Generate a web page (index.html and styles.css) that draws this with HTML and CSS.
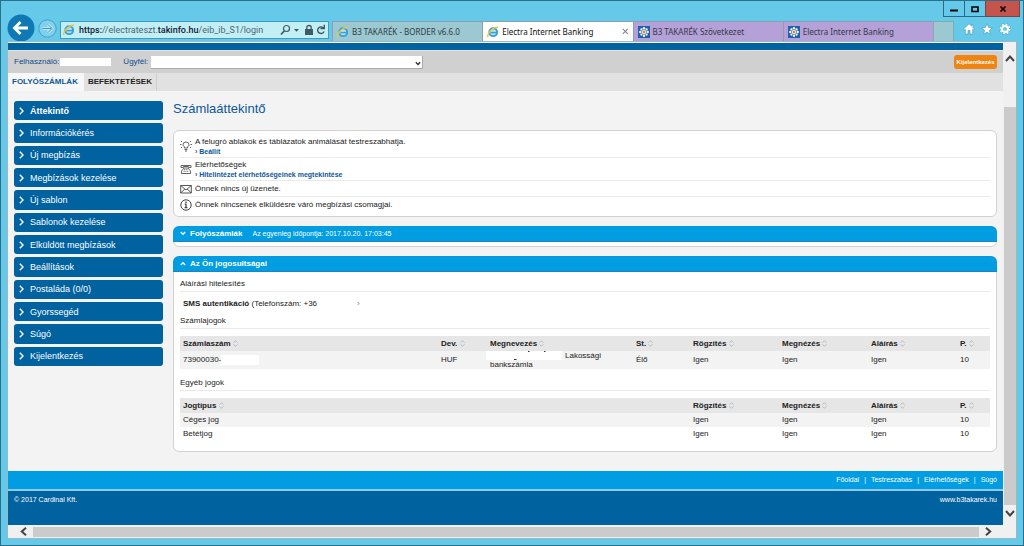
FILE: index.html
```html
<!DOCTYPE html>
<html lang="hu">
<head>
<meta charset="utf-8">
<title>Electra Internet Banking</title>
<link rel="stylesheet" href="styles.css">
</head>
<body>
<svg class="defs" aria-hidden="true">
  <symbol id="ie" viewBox="0 0 12 12"><circle cx="6.2" cy="6.2" r="3.9" fill="#b9e4f8" stroke="#3d9fdc" stroke-width="2"/><path d="M3.5 6.6h7" stroke="#3d9fdc" stroke-width="1.6"/><path d="M1 11C-.4 8 6 .8 11 1.2" fill="none" stroke="#e9c63a" stroke-width="1.5"/></symbol>
  <symbol id="b3" viewBox="0 0 12 12"><path fill="#1d62ad" d="M0 0h12v12H0z"/><g fill="#fff"><circle cx="6" cy="2.3" r="1.2"/><circle cx="6" cy="9.7" r="1.2"/><circle cx="2.3" cy="6" r="1.2"/><circle cx="9.7" cy="6" r="1.2"/><circle cx="3.4" cy="3.4" r="1.1"/><circle cx="8.6" cy="3.4" r="1.1"/><circle cx="3.4" cy="8.6" r="1.1"/><circle cx="8.6" cy="8.6" r="1.1"/><circle cx="6" cy="6" r="2.2"/></g><circle cx="6" cy="6" r="1.4" fill="#e5803c"/></symbol>
  <symbol id="sort" viewBox="0 0 5 7"><path d="M.5 2.7 2.5.7l2 2M.5 4.3l2 2 2-2" fill="none" stroke="#b8b8b8" stroke-width=".9"/></symbol>
  <symbol id="chev" viewBox="0 0 5 8"><path d="M.8.8 4 4 .8 7.2" fill="none" stroke="currentColor" stroke-width="1.4"/></symbol>
</svg>

<header class="titlebar">
  <button class="win" aria-label="Minimize"><svg width="10" height="8"><path d="M1 5.500h8" stroke="#000" stroke-width="2"/></svg></button>
  <button class="win" aria-label="Maximize"><svg width="10" height="8"><path d="M2 2h6v4.500H2z" fill="none" stroke="#000" stroke-width="1.600"/></svg></button>
  <button class="win close" aria-label="Close"><svg width="8" height="8"><path d="m1.500 1.500 5 5m0-5-5 5" stroke="#000" stroke-width="1.700"/></svg></button>
</header>

<div class="toolbar">
  <button class="back" aria-label="Back"><svg width="28" height="28" viewBox="0 0 28 28"><circle cx="14" cy="14" r="13.500" fill="#0f79b5"/><path d="M7.500 14H21M13.500 8l-6 6 6 6" fill="none" stroke="#fff" stroke-width="2.800"/></svg></button>
  <button class="forward" aria-label="Forward"><svg width="19" height="19" viewBox="0 0 19 19"><circle cx="9.500" cy="9.500" r="8.700" fill="#7fcfee" stroke="#479fc4"/><path d="M4.500 9.500h9M10 5.500l4 4-4 4" fill="none" stroke="#b9e9f8" stroke-width="3"/><path d="M4.500 9.500h9M10 5.500l4 4-4 4" fill="none" stroke="#3c98c0"/></svg></button>
  <div class="address">
    <svg width="12" height="12"><use href="#ie"/></svg>
    <span class="url"><b>https:</b>//electrateszt.<b>takinfo.hu</b>/eib_ib_S1/login</span>
    <svg width="46" height="12" viewBox="0 0 46 12" fill="none" stroke="#3f5a66"><circle cx="6.500" cy="4.500" r="3" stroke-width="1.200"/><path d="M4.200 7 1 10.500" stroke-width="1.700"/><path d="M14 5h5l-2.500 2.800z" fill="#3f5a66" stroke="none"/><path d="M25 5h8v6h-8z" fill="#3f5a66" stroke="none"/><path d="M26.800 5.500V3.500q0-2 2.200-2t2.200 2v2" stroke-width="1.300"/><path d="M43.600 4.200A3.300 3.300 0 1 0 44 7.500M44.300.7v3.800h-3.800" stroke-width="1.400"/></svg>
  </div>
  <nav class="tabs">
    <a class="tab teal" href="#"><svg width="12" height="12"><use href="#ie"/></svg>B3 TAKARÉK - BORDER v6.6.0</a>
    <a class="tab active" href="#"><svg width="12" height="12"><use href="#ie"/></svg>Electra Internet Banking<svg class="x" width="7" height="7"><path d="m.8.8 5 5m0-5-5 5" stroke="#8b8b8b" stroke-width="1.200"/></svg></a>
    <a class="tab lilac" href="#"><svg width="12" height="12"><use href="#b3"/></svg>B3 TAKARÉK Szövetkezet</a>
    <a class="tab lilac" href="#"><svg width="12" height="12"><use href="#b3"/></svg>Electra Internet Banking</a>
  </nav>
  <button class="newtab" aria-label="New tab"></button>
  <div class="tools">
    <button aria-label="Home"><svg width="12" height="12"><path d="M6 .8.6 6l.9.9.8-.7v4.900h2.700V7.500h2v3.600h2.700V6.200l.8.7.9-.9-1.500-1.500V1.500H8.500v1.600z" fill="#fff" stroke="#4a93b0" stroke-width=".6"/></svg></button>
    <button aria-label="Favorites"><svg width="12" height="12"><path d="m6 .6 1.500 3.800 4 .3-3.100 2.600 1 4L6 9.100l-3.400 2.200 1-4L.5 4.700l4-.3z" fill="#fff" stroke="#4a93b0" stroke-width=".6"/></svg></button>
    <button aria-label="Tools"><svg width="12" height="12" fill="none"><circle cx="6" cy="6" r="4.900" stroke="#4a93b0" stroke-width="2" stroke-dasharray="2.300 1.550"/><circle cx="6" cy="6" r="4.700" stroke="#fff" stroke-width="1.600" stroke-dasharray="1.900 1.790"/><circle cx="6" cy="6" r="3" stroke="#fff" stroke-width="1.900"/></svg></button>
  </div>
</div>

<div class="frame">
  <div class="page">
    <div class="brand"></div>
    <form class="userbar">
      <span>Felhasználó:</span><span class="blank user"></span>
      <label for="client">Ügyfél:</label>
      <span class="selectbox"><select id="client"><option></option></select><svg width="6" height="5"><path d="m.8 1.200 2.200 2.300 2.200-2.300" fill="none" stroke="#333" stroke-width="1.400"/></svg></span>
      <button class="logout" type="button">Kijelentkezés</button>
    </form>
    <nav class="maintabs"><a class="on" href="#">FOLYÓSZÁMLÁK</a><a href="#">BEFEKTETÉSEK</a></nav>

    <div class="content">
      <nav class="side">
        <a class="current" href="#"><svg width="5" height="8"><use href="#chev"/></svg>Áttekintő</a>
        <a href="#"><svg width="5" height="8"><use href="#chev"/></svg>Információkérés</a>
        <a href="#"><svg width="5" height="8"><use href="#chev"/></svg>Új megbízás</a>
        <a href="#"><svg width="5" height="8"><use href="#chev"/></svg>Megbízások kezelése</a>
        <a href="#"><svg width="5" height="8"><use href="#chev"/></svg>Új sablon</a>
        <a href="#"><svg width="5" height="8"><use href="#chev"/></svg>Sablonok kezelése</a>
        <a href="#"><svg width="5" height="8"><use href="#chev"/></svg>Elküldött megbízások</a>
        <a href="#"><svg width="5" height="8"><use href="#chev"/></svg>Beállítások</a>
        <a href="#"><svg width="5" height="8"><use href="#chev"/></svg>Postaláda (0/0)</a>
        <a href="#"><svg width="5" height="8"><use href="#chev"/></svg>Gyorssegéd</a>
        <a href="#"><svg width="5" height="8"><use href="#chev"/></svg>Súgó</a>
        <a href="#"><svg width="5" height="8"><use href="#chev"/></svg>Kijelentkezés</a>
      </nav>

      <main>
        <h1>Számlaáttekintő</h1>
        <ul class="card notices">
          <li class="tall"><svg width="12" height="12" fill="none" stroke="#555" stroke-width=".9"><path d="M4.500 8V7Q3 5.800 3 4.800a3 2.800 0 0 1 6 0Q9 5.800 7.500 7v1zM4.500 9.500h3M5 11h2M0 4.500h1.500m9 0H12M1 1l1 1m9-1-1 1M1 8l1-1m9 1-1-1"/></svg><div>A felugró ablakok és táblázatok animálását testreszabhatja.<a href="#">› Beállít</a></div></li>
          <li class="tall"><svg width="12" height="12" fill="none" stroke="#555" stroke-width=".9"><path d="M1 4.500V2.500h10v2H8.500V3.500h-5v1zM4 5h4l2.500 3v2.500h-9V8z"/><path d="M4 6.700h4M3.500 8.300h5" stroke-dasharray="1 .8"/></svg><div>Elérhetőségek<a href="#">› Hitelintézet elérhetőségeinek megtekintése</a></div></li>
          <li><svg width="12" height="12" fill="none" stroke="#444" stroke-width=".9"><path d="M.7 2.500h10.600v7.500H.7zl5.300 4.500 5.300-4.500M.7 10l4-4m6.600 4-4-4"/></svg><div>Önnek nincs új üzenete.</div></li>
          <li><svg width="12" height="12" fill="none" stroke="#444"><circle cx="6" cy="6" r="5.200"/><path d="M6 2.500v1.400M4.800 5.200H6v3.500m-1.400 0h2.800" stroke-width="1.300"/></svg><div>Önnek nincsenek elküldésre váró megbízási csomagjai.</div></li>
        </ul>

        <section class="card closed">
          <h2><svg width="6" height="5"><path d="m.8 1 2.200 2.300L5.200 1" fill="none" stroke="#fff" stroke-width="1.300"/></svg>Folyószámlák <small>Az egyenleg időpontja: 2017.10.20. 17:03:45</small></h2>
        </section>

        <section class="card rights">
          <h2><svg width="6" height="5"><path d="m.8 4 2.200-2.300L5.200 4" fill="none" stroke="#fff" stroke-width="1.300"/></svg>Az Ön jogosultságai</h2>
          <div class="inner">
            <h3>Aláírási hitelesítés</h3>
            <p><b>SMS autentikáció</b> (Telefonszám: +36<span class="rest">›</span></p>
            <h3>Számlajogok</h3>
            <table>
              <colgroup><col><col class="c-dev"><col class="c-name"><col class="c-st"><col class="c-r"><col class="c-r"><col class="c-r"><col class="c-p"></colgroup>
              <thead><tr><th>Számlaszám <svg width="5" height="7"><use href="#sort"/></svg></th><th>Dev. <svg width="5" height="7"><use href="#sort"/></svg></th><th>Megnevezés <svg width="5" height="7"><use href="#sort"/></svg></th><th>St. <svg width="5" height="7"><use href="#sort"/></svg></th><th>Rögzítés <svg width="5" height="7"><use href="#sort"/></svg></th><th>Megnézés <svg width="5" height="7"><use href="#sort"/></svg></th><th>Aláírás <svg width="5" height="7"><use href="#sort"/></svg></th><th>P. <svg width="5" height="7"><use href="#sort"/></svg></th></tr></thead>
              <tbody><tr class="shade"><td>73900030-<span class="blank acct"></span></td><td>HUF</td><td class="name"><svg class="mask" width="76" height="9"><path d="M0 0h76v9H0z" fill="#fff"/><path d="M42 .5h1.500M58 .5h1.500M28 8.500h2.500" stroke="#333"/></svg>Lakossági<br>bankszámla</td><td>Élő</td><td>Igen</td><td>Igen</td><td>Igen</td><td>10</td></tr></tbody>
            </table>
            <h3 class="other">Egyéb jogok</h3>
            <table>
              <colgroup><col><col class="c-r"><col class="c-r"><col class="c-r"><col class="c-p"></colgroup>
              <thead><tr><th>Jogtípus <svg width="5" height="7"><use href="#sort"/></svg></th><th>Rögzítés <svg width="5" height="7"><use href="#sort"/></svg></th><th>Megnézés <svg width="5" height="7"><use href="#sort"/></svg></th><th>Aláírás <svg width="5" height="7"><use href="#sort"/></svg></th><th>P. <svg width="5" height="7"><use href="#sort"/></svg></th></tr></thead>
              <tbody><tr class="shade"><td>Céges jog</td><td>Igen</td><td>Igen</td><td>Igen</td><td>10</td></tr>
              <tr><td>Betétjog</td><td>Igen</td><td>Igen</td><td>Igen</td><td>10</td></tr></tbody>
            </table>
          </div>
        </section>
      </main>
    </div>

    <footer>
      <nav class="links"><a href="#">Főoldal</a>|<a href="#">Testreszabás</a>|<a href="#">Elérhetőségek</a>|<a href="#">Súgó</a></nav>
      <div class="legal"><span>© 2017 Cardinal Kft.</span><a href="#">www.b3takarek.hu</a></div>
    </footer>
  </div>
  <div class="vscroll"><svg width="10" height="7"><path d="m1 6 4-4.500L9 6" fill="none" stroke="#444" stroke-width="2"/></svg><i></i><svg width="10" height="7"><path d="m1 1 4 4.500L9 1" fill="none" stroke="#444" stroke-width="2"/></svg></div>
  <div class="hscroll"><svg width="7" height="9"><path d="M6 .8 1.800 4.500 6 8.200" fill="none" stroke="#444" stroke-width="2"/></svg><i></i><svg width="7" height="9"><path d="m1 .8 4.200 3.700L1 8.200" fill="none" stroke="#444" stroke-width="2"/></svg></div>
</div>
</body>
</html>
```
FILE: styles.css
```css
* { box-sizing: border-box; }
body {
  margin: 0;
  min-height: 100vh;
  display: flex;
  flex-direction: column;
  padding: 0 6px 6px;
  background: #65c9ea;
  border: 1px solid #2c6f8c;
  font: 8px/10px "Liberation Sans", Arial, sans-serif;
  color: #222;
}
a { color: inherit; text-decoration: none; }
button { padding: 0; border: 0; background: none; font: inherit; color: inherit; }
svg { display: block; flex: none; }
h1, h2, h3, p, ul { margin: 0; padding: 0; }
.defs { position: absolute; width: 0; height: 0; }

/* browser chrome */
.titlebar { display: flex; justify-content: flex-end; height: 16px; margin-right: -3px; }
.win { display: flex; align-items: center; justify-content: center; width: 21px; height: 16px; border: 1px solid #2f6880; border-top: 0; border-right: 0; }
.win.close { width: 35px; background: #c5554c; border-color: #7b4444; border-right: 1px solid #7b4444; }
.toolbar { display: flex; align-items: flex-end; height: 24px; font-family: "Noto Sans", "Open Sans", sans-serif; }
.back { margin: 0 3px -1px 0; }
.forward { margin: 0 3px 3px 0; }
.address { display: flex; align-items: center; gap: 4px; width: 269px; height: 18px; margin-bottom: 2px; padding: 0 2px; border: 1px solid #3d9cc0; background: #c2eef6; }
.url { flex: 1; color: #4c6770; white-space: nowrap; font: 9px/12px Roboto, sans-serif; }
.url b { font-weight: 500; color: #123; }
.tabs { display: flex; flex: 1; height: 20px; margin-left: 3px; }
.tab { display: flex; flex: 1; align-items: center; gap: 3px; padding: 0 4px; border: 1px solid #8b9fb0; border-width: 1px 0 0 1px; color: #2f3b44; white-space: nowrap; }
.teal { background: #9cc8d2; }
.active { background: #fff; color: #111; }
.lilac { background: #b5a0d8; }
.x { margin-left: auto; }
.newtab { width: 21px; height: 20px; background: #9cc8d2; border: 1px solid #7fa9b5; border-bottom: 0; }
.tools { display: flex; gap: 6px; padding: 0 6px 6px 9px; }

/* viewport */
.frame {
  flex: 1;
  display: grid;
  grid-template: 1fr 13px / 1fr 13px;
  border: 1px solid #9fb6c4;
  background: #f0f0f0;
}
.page { display: flex; flex-direction: column; background: #f3f3f3; min-width: 0; padding-top: 1px; }
.brand { height: 7px; background: #00629f; }
.userbar { display: flex; align-items: center; height: 23px; padding: 0 6px; background: #d0d0d0; border-top: 1px solid #e6e6e6; color: #0e4c8c; }
.blank { display: inline-block; background: #fff; }
.user { width: 51px; height: 8px; margin: 0 12px 0 1px; }
.selectbox { position: relative; width: 272px; margin-left: 3px; }
.selectbox select { display: block; appearance: none; width: 100%; height: 13px; padding: 0; border: 1px solid #aaa; border-width: 0 1px 1px 0; border-radius: 0; background: #fff; }
.selectbox svg { position: absolute; right: 2px; top: 5px; pointer-events: none; }
.logout { margin-left: auto; width: 43px; height: 14px; border-radius: 3px; background: #ee8412; color: #fff; font: bold 6px/14px "Liberation Sans", Arial, sans-serif; }
.maintabs { display: flex; height: 18px; background: #e1e1e1; font-weight: bold; line-height: 18px; }
.maintabs a { padding: 0 4px; border-right: 1px solid #cfcfcf; }
.maintabs .on { padding-right: 6px; background: #f7f7f7; color: #0e5799; border: 0; }

.content { flex: 1; display: flex; align-items: flex-start; gap: 10px; padding: 10px 6px 19px; }
.side { display: flex; flex-direction: column; gap: 3px; width: 149px; height: 265px; flex: none; }
.side a { flex: 1; display: flex; align-items: center; gap: 6px; padding: 0 5px; border-radius: 3px; background: #00629f; color: #fff; font-size: 9px; }
.side .current { font-weight: bold; }
main { flex: 1; min-width: 0; }
h1 { margin-bottom: 13px; font-size: 13px; line-height: 16px; font-weight: normal; color: #0e5799; }
.card { margin-bottom: 9px; border: 1px solid #d2d2d2; border-radius: 6px; background: #fff; }
.notices { padding: 4px 6px 3px; list-style: none; }
.notices li { display: flex; align-items: center; gap: 3px; min-height: 16px; border-bottom: 1px solid #eaeaea; }
.notices .tall { min-height: 23px; }
.notices li:last-child { border: 0; }
.notices a { display: block; height: 9px; line-height: 9px; font-size: 7px; font-weight: bold; color: #0e5799; }
h2 { display: flex; align-items: center; gap: 4px; height: 16px; padding: 0 7px; margin: -1px -1px 0; border-radius: 6px 6px 0 0; border-bottom: 1px solid #1d84bd; background: #009de3; color: #fff; font-size: 8px; }
h2 small { margin-left: 6px; font-size: 7px; font-weight: normal; }
.closed { padding-bottom: 4px; }
.rights { margin: 0; }
.inner { padding: 7px 6px 10px; }
h3 { height: 13px; margin-bottom: 7px; border-bottom: 1px solid #eaeaea; font-size: 8px; line-height: 10px; font-weight: normal; }
p { padding: 0 3px; margin-bottom: 7px; }
.rest { margin-left: 40px; color: #777; }
.inner .other { margin-top: 9px; }
table { width: 100%; table-layout: fixed; border-collapse: collapse; }
th, td { padding: 0 3px; text-align: left; white-space: nowrap; height: 14px; }
thead tr { height: 15px; background: #e6e6e6; }
th svg { display: inline-block; vertical-align: middle; }
.shade { background: #f3f3f3; }
.c-dev { width: 49px; }
.c-name { width: 146px; }
.c-st { width: 57px; }
.c-r { width: 89px; }
.c-p { width: 33px; }
.acct { width: 38px; height: 10px; vertical-align: middle; }
.name { line-height: 9px; }
.mask { display: inline-block; vertical-align: middle; margin: 0 3px 0 -4px; }

footer { color: #fff; font-size: 7px; }
.links { display: flex; justify-content: flex-end; align-items: center; gap: 5px; height: 18px; padding: 0 6px; background: #009de3; }
.legal { display: flex; justify-content: space-between; height: 36px; padding: 4px 6px 0; border-top: 2px solid #8fc8e8; background: #00629f; }

.vscroll { display: flex; flex-direction: column; align-items: center; padding: 13px 0 0; gap: 5px; }
.vscroll i { flex: 1; width: 12px; margin-top: 40px; background: #cbcbcb; }
.vscroll svg:last-child { margin: 0 0 8px; }
.hscroll { display: flex; align-items: center; gap: 6px; padding: 0 11px 0 12px; }
.hscroll i { flex: 1; height: 10px; background: #cbcbcb; }
```
